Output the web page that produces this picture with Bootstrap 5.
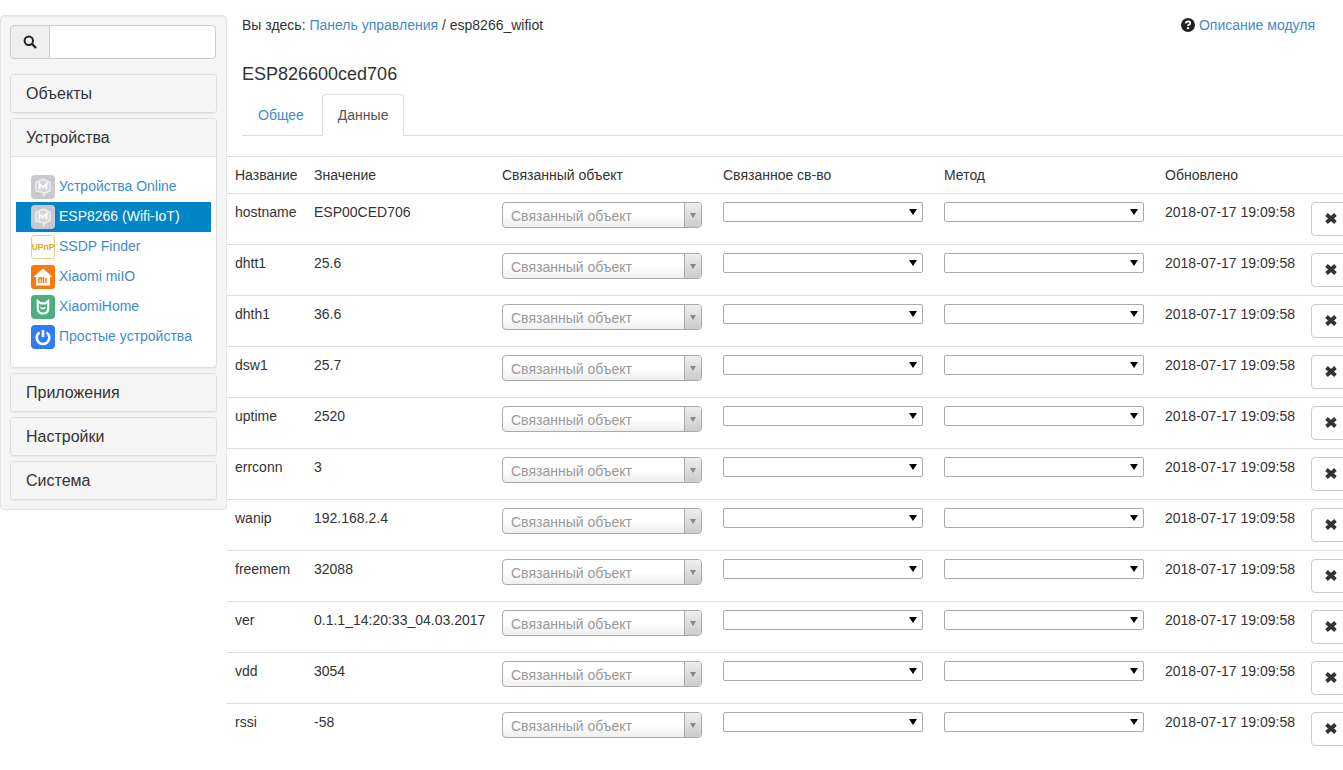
<!DOCTYPE html>
<html lang="ru"><head><meta charset="utf-8"><title>ESP8266</title>
<link href="https://cdn.jsdelivr.net/npm/bootstrap@5.3.0/dist/css/bootstrap.min.css" rel="stylesheet">
<style>
html,body{height:770px;overflow:hidden}
body{font-family:"Liberation Sans",Arial,sans-serif;font-size:14px;line-height:20px;color:#333;background:#fff}
a{color:#428bca;text-decoration:none}
.page-wrap{align-items:flex-start;width:1343px}
.side-well{width:227px;flex:none;margin-top:15px;height:495px;background:#f5f5f5;border:1px solid #e3e3e3;border-radius:4px;padding:9px;box-shadow:inset 0 1px 1px rgba(0,0,0,.05)}
.search-box{height:34px;width:206px;margin-bottom:15px}
.search-addon{width:40px;background:#eee;border:1px solid #ccc;border-radius:4px 0 0 4px;justify-content:center}
.search-field{flex:1;border:1px solid #ccc;border-left:0;border-radius:0 4px 4px 0;background:#fff;min-width:0}
.side-panel{border:1px solid #ddd;border-radius:4px;margin-bottom:5px;background:#fff;width:207px;box-shadow:0 1px 1px rgba(0,0,0,.05);overflow:hidden}
.side-head{height:37px;padding:0 15px;display:flex;align-items:center;font-size:16px;background:#f5f5f5;color:#333}
.side-body{border-top:1px solid #ddd;padding:15px 5px}
.side-item{height:30px;display:flex;align-items:center;padding-left:15px;gap:4px;color:#428bca}
.side-item span{margin-bottom:2px}
.side-item.sel{background:#0085c8;color:#fff}
.main-area{flex:1;min-width:0;overflow:hidden;height:770px}
.crumbs{padding:15px 28px 0 15px;height:64px;align-items:flex-start;justify-content:space-between}
.obj-title{font-size:18px;line-height:20px;font-weight:400;margin:0 0 10px 15px;height:20px;color:#333}
.tab-row{margin-left:15px;border-bottom:1px solid #ddd;height:42px;gap:2px;margin-bottom:20px}
.tab-link{display:block;padding:10px 15px;height:42px;border:1px solid transparent;border-radius:4px 4px 0 0;color:#428bca}
.tab-link.on{color:#555;background:#fff;border-color:#ddd #ddd #fff}
.data-grid{table-layout:fixed;width:1170px;margin:0;border-top:1px solid #ddd;color:#333;--bs-table-color:#333;--bs-table-border-color:#ddd}
.data-grid th{font-weight:400;padding:8px;height:37px;border-bottom:1px solid #ddd;vertical-align:top}
.data-grid td{padding:8px;height:51px;border-bottom:1px solid #ddd;border-top:0;vertical-align:top}
.data-grid tbody tr:last-child td{border-bottom:0}
.linked{width:200px;height:26px;border:1px solid #aaa;border-radius:4px;background:linear-gradient(#fff 50%,#eee);color:#999;padding-left:8px;line-height:26px;overflow:hidden}
.linked-txt{flex:1}
.linked-arrow{width:17px;height:100%;border-left:1px solid #aaa;background:linear-gradient(#eee,#ccc);display:flex;align-items:center;justify-content:center}
.tri-gray{width:0;height:0;border-left:3.5px solid transparent;border-right:3.5px solid transparent;border-top:5px solid #888}
.plain-sel{width:200px;height:20px;border:1px solid #a9a9a9;border-radius:2px;background:#fff;justify-content:flex-end;padding-right:5px}
.tri-black{width:0;height:0;border-left:4px solid transparent;border-right:4px solid transparent;border-top:6px solid #000}
.del-btn{width:44px;height:34px;padding:0 0 2px 13px;border:1px solid #ccc;border-radius:4px;background:#fff;display:flex;align-items:center}
</style></head><body>
<svg width="0" height="0" class="d-none"><symbol id="xmark" viewBox="0 0 12 11"><path d="M1.500 1.500l9 8M10.500 1.500l-9 8" fill="none" stroke="#333" stroke-width="3.800"/></symbol>
<symbol id="mbubble" viewBox="0 0 24 24"><rect width="24" height="24" rx="4" fill="#c9c9cf"/><path d="M12 4l7 3.500V16l-4 1.500-2.500 3v-3L5 16V7.500z" fill="#d4d4d8" stroke="#eee" stroke-width="1.500"/><path d="M8.500 14.500V9l3.500 3.500L15.500 9v5.500" fill="none" stroke="#fff" stroke-width="1.800"/></symbol></svg>
<div class="d-flex page-wrap">
<aside class="side-well">
 <div class="d-flex search-box">
  <div class="search-addon d-flex align-items-center"><svg width="14" height="14" viewBox="0 0 14 14"><circle cx="5.800" cy="5.800" r="4.200" fill="none" stroke="#222" stroke-width="2"/><path d="M9 9l4 4" stroke="#222" stroke-width="2.400"/></svg></div>
  <div class="search-field"></div>
 </div>
 <div class="side-panel"><div class="side-head">Объекты</div></div>
 <div class="side-panel"><div class="side-head">Устройства</div>
  <div class="side-body">
   <a class="side-item" href="#"><svg width="24" height="24"><use href="#mbubble"/></svg><span>Устройства Online</span></a>
   <a class="side-item sel" href="#"><svg width="24" height="24"><use href="#mbubble"/></svg><span>ESP8266 (Wifi-IoT)</span></a>
   <a class="side-item" href="#"><svg width="24" height="24" viewBox="0 0 24 24"><rect x=".5" y=".5" width="23" height="23" rx="3" fill="#fff" stroke="#e8cf70"/><text x="12" y="15" font-size="8.500" font-weight="700" text-anchor="middle" fill="#dcaa2a" font-family="Liberation Sans">UPnP</text></svg><span>SSDP Finder</span></a>
   <a class="side-item" href="#"><svg width="24" height="24" viewBox="0 0 24 24"><rect width="24" height="24" rx="3" fill="#f97a0c"/><path d="M12 3.500L2.500 12H5v8.500h14V12h2.500z" fill="#fff"/><path d="M8 18v-5h4.500v5M10.300 13v5M15 13v5" fill="none" stroke="#f97a0c" stroke-width="1.400"/></svg><span>Xiaomi miIO</span></a>
   <a class="side-item" href="#"><svg width="24" height="24" viewBox="0 0 24 24"><rect width="24" height="24" rx="4" fill="#4caf82"/><path d="M6.800 6l3 2.300h4.400l3-2.300v7.500q0 5-5.200 5t-5.200-5z" fill="none" stroke="#fff" stroke-width="2.200"/><path d="M9.500 12.500q2.500 2 5 0" fill="none" stroke="#fff" stroke-width="1.600"/></svg><span>XiaomiHome</span></a>
   <a class="side-item" href="#"><svg width="24" height="24" viewBox="0 0 24 24"><rect width="24" height="24" rx="4" fill="#2f7cf6"/><path d="M8.500 7.500a6.300 6.300 0 1 0 7 0" fill="none" stroke="#fff" stroke-width="2.600"/><path d="M12 5v7" stroke="#fff" stroke-width="2.600"/></svg><span>Простые устройства</span></a>
  </div></div>
 <div class="side-panel"><div class="side-head">Приложения</div></div>
 <div class="side-panel"><div class="side-head">Настройки</div></div>
 <div class="side-panel"><div class="side-head">Система</div></div>
</aside>
<main class="main-area">
 <div class="d-flex crumbs">
  <div>Вы здесь: <a href="#">Панель управления</a> / esp8266_wifiot</div>
  <a href="#" class="d-flex align-items-center gap-1"><svg width="14" height="14" viewBox="0 0 14 14"><circle cx="7" cy="7" r="7" fill="#222"/><path d="M4.700 5.400Q5 3.400 7.200 3.400 9.400 3.500 9.300 5.200 9.200 6.300 7.800 6.800 7 7.100 7 8" fill="none" stroke="#fff" stroke-width="1.800"/><rect x="6" y="9.200" width="2" height="1.900" fill="#fff"/></svg>Описание модуля</a>
 </div>
 <h1 class="obj-title">ESP826600ced706</h1>
 <div class="d-flex tab-row"><a class="tab-link" href="#">Общее</a><a class="tab-link on" href="#">Данные</a></div>
 <table class="table data-grid">
  <colgroup><col style="width:79px"><col style="width:188px"><col style="width:221px"><col style="width:221px"><col style="width:221px"><col style="width:146px"><col style="width:94px"></colgroup>
  <thead><tr><th>Название</th><th>Значение</th><th>Связанный объект</th><th>Связанное св-во</th><th>Метод</th><th>Обновлено</th><th></th></tr></thead>
  <tbody>
  <tr><td>hostname</td><td>ESP00CED706</td><td><div class="linked d-flex"><span class="linked-txt">Связанный объект</span><span class="linked-arrow"><span class="tri-gray"></span></span></div></td><td><div class="plain-sel d-flex align-items-center"><span class="tri-black"></span></div></td><td><div class="plain-sel d-flex align-items-center"><span class="tri-black"></span></div></td><td>2018-07-17 19:09:58</td><td><button class="del-btn" type="button"><svg width="12" height="11"><use href="#xmark"/></svg></button></td></tr>
  <tr><td>dhtt1</td><td>25.6</td><td><div class="linked d-flex"><span class="linked-txt">Связанный объект</span><span class="linked-arrow"><span class="tri-gray"></span></span></div></td><td><div class="plain-sel d-flex align-items-center"><span class="tri-black"></span></div></td><td><div class="plain-sel d-flex align-items-center"><span class="tri-black"></span></div></td><td>2018-07-17 19:09:58</td><td><button class="del-btn" type="button"><svg width="12" height="11"><use href="#xmark"/></svg></button></td></tr>
  <tr><td>dhth1</td><td>36.6</td><td><div class="linked d-flex"><span class="linked-txt">Связанный объект</span><span class="linked-arrow"><span class="tri-gray"></span></span></div></td><td><div class="plain-sel d-flex align-items-center"><span class="tri-black"></span></div></td><td><div class="plain-sel d-flex align-items-center"><span class="tri-black"></span></div></td><td>2018-07-17 19:09:58</td><td><button class="del-btn" type="button"><svg width="12" height="11"><use href="#xmark"/></svg></button></td></tr>
  <tr><td>dsw1</td><td>25.7</td><td><div class="linked d-flex"><span class="linked-txt">Связанный объект</span><span class="linked-arrow"><span class="tri-gray"></span></span></div></td><td><div class="plain-sel d-flex align-items-center"><span class="tri-black"></span></div></td><td><div class="plain-sel d-flex align-items-center"><span class="tri-black"></span></div></td><td>2018-07-17 19:09:58</td><td><button class="del-btn" type="button"><svg width="12" height="11"><use href="#xmark"/></svg></button></td></tr>
  <tr><td>uptime</td><td>2520</td><td><div class="linked d-flex"><span class="linked-txt">Связанный объект</span><span class="linked-arrow"><span class="tri-gray"></span></span></div></td><td><div class="plain-sel d-flex align-items-center"><span class="tri-black"></span></div></td><td><div class="plain-sel d-flex align-items-center"><span class="tri-black"></span></div></td><td>2018-07-17 19:09:58</td><td><button class="del-btn" type="button"><svg width="12" height="11"><use href="#xmark"/></svg></button></td></tr>
  <tr><td>errconn</td><td>3</td><td><div class="linked d-flex"><span class="linked-txt">Связанный объект</span><span class="linked-arrow"><span class="tri-gray"></span></span></div></td><td><div class="plain-sel d-flex align-items-center"><span class="tri-black"></span></div></td><td><div class="plain-sel d-flex align-items-center"><span class="tri-black"></span></div></td><td>2018-07-17 19:09:58</td><td><button class="del-btn" type="button"><svg width="12" height="11"><use href="#xmark"/></svg></button></td></tr>
  <tr><td>wanip</td><td>192.168.2.4</td><td><div class="linked d-flex"><span class="linked-txt">Связанный объект</span><span class="linked-arrow"><span class="tri-gray"></span></span></div></td><td><div class="plain-sel d-flex align-items-center"><span class="tri-black"></span></div></td><td><div class="plain-sel d-flex align-items-center"><span class="tri-black"></span></div></td><td>2018-07-17 19:09:58</td><td><button class="del-btn" type="button"><svg width="12" height="11"><use href="#xmark"/></svg></button></td></tr>
  <tr><td>freemem</td><td>32088</td><td><div class="linked d-flex"><span class="linked-txt">Связанный объект</span><span class="linked-arrow"><span class="tri-gray"></span></span></div></td><td><div class="plain-sel d-flex align-items-center"><span class="tri-black"></span></div></td><td><div class="plain-sel d-flex align-items-center"><span class="tri-black"></span></div></td><td>2018-07-17 19:09:58</td><td><button class="del-btn" type="button"><svg width="12" height="11"><use href="#xmark"/></svg></button></td></tr>
  <tr><td>ver</td><td>0.1.1_14:20:33_04.03.2017</td><td><div class="linked d-flex"><span class="linked-txt">Связанный объект</span><span class="linked-arrow"><span class="tri-gray"></span></span></div></td><td><div class="plain-sel d-flex align-items-center"><span class="tri-black"></span></div></td><td><div class="plain-sel d-flex align-items-center"><span class="tri-black"></span></div></td><td>2018-07-17 19:09:58</td><td><button class="del-btn" type="button"><svg width="12" height="11"><use href="#xmark"/></svg></button></td></tr>
  <tr><td>vdd</td><td>3054</td><td><div class="linked d-flex"><span class="linked-txt">Связанный объект</span><span class="linked-arrow"><span class="tri-gray"></span></span></div></td><td><div class="plain-sel d-flex align-items-center"><span class="tri-black"></span></div></td><td><div class="plain-sel d-flex align-items-center"><span class="tri-black"></span></div></td><td>2018-07-17 19:09:58</td><td><button class="del-btn" type="button"><svg width="12" height="11"><use href="#xmark"/></svg></button></td></tr>
  <tr><td>rssi</td><td>-58</td><td><div class="linked d-flex"><span class="linked-txt">Связанный объект</span><span class="linked-arrow"><span class="tri-gray"></span></span></div></td><td><div class="plain-sel d-flex align-items-center"><span class="tri-black"></span></div></td><td><div class="plain-sel d-flex align-items-center"><span class="tri-black"></span></div></td><td>2018-07-17 19:09:58</td><td><button class="del-btn" type="button"><svg width="12" height="11"><use href="#xmark"/></svg></button></td></tr>
  </tbody>
 </table>
</main>
</div>
<script src="https://cdn.jsdelivr.net/npm/bootstrap@5.3.0/dist/js/bootstrap.bundle.min.js"></script>
</body></html>
